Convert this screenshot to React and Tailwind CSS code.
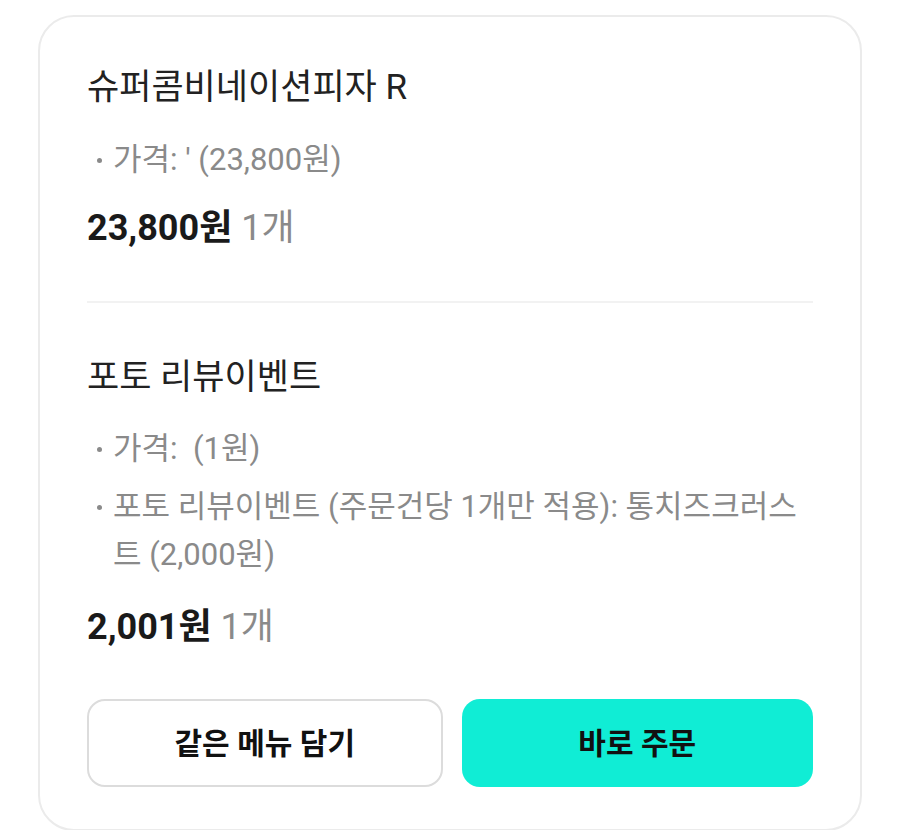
import React from "react";

const font = { fontFamily: 'Roboto, "Noto Sans CJK KR", "Noto Sans", sans-serif' };

function Bullet({ children }) {
  return (
    <div className="flex text-[31px] leading-[48px] text-[#8a8a8a]">
      <span className="w-[26px] h-[48px] shrink-0 flex items-center pl-[10px]">
        <span className="block w-[5px] h-[5px] rounded-full bg-[#8a8a8a]" />
      </span>
      <span>{children}</span>
    </div>
  );
}

export default function App() {
  return (
    <div className="w-[900px] h-[830px] bg-white overflow-hidden" style={font}>
      <div className="ml-[38px] mt-[15px] w-[824px] rounded-[36px] border-2 border-[#ebebeb] bg-white px-[47px] pt-[51px] pb-[42px]">
        <div className="text-[35px] leading-[40px] text-[#222]">슈퍼콤비네이션피자 R</div>
        <div className="mt-[28px]">
          <Bullet>가격: ' (23,800원)</Bullet>
        </div>
        <div className="mt-[24px] text-[36px] leading-[40px]">
          <span className="font-bold text-[#1a1a1a]">23,800원</span>
          <span className="text-[#8a8a8a]"> 1개</span>
        </div>
        <div className="mt-[53px] h-[2px] bg-[#f2f2f2]" />
        <div className="mt-[55px] text-[35px] leading-[40px] text-[#222]">포토 리뷰이벤트</div>
        <div className="mt-[27px] flex flex-col gap-[10px]">
          <Bullet>가격:&nbsp; (1원)</Bullet>
          <Bullet>포토 리뷰이벤트 (주문건당 1개만 적용): 통치즈크러스트 (2,000원)</Bullet>
        </div>
        <div className="mt-[28px] text-[36px] leading-[40px]">
          <span className="font-bold text-[#1a1a1a]">2,001원</span>
          <span className="text-[#8a8a8a]"> 1개</span>
        </div>
        <div className="mt-[52px] flex gap-[19px]">
          <button className="flex-1 h-[88px] rounded-[18px] border-2 border-[#dcdcdc] bg-white text-[30px] font-bold text-[#111]">
            같은 메뉴 담기
          </button>
          <button className="flex-1 h-[88px] rounded-[18px] bg-[#10edd5] text-[30px] font-bold text-[#111]">
            바로 주문
          </button>
        </div>
      </div>
    </div>
  );
}
